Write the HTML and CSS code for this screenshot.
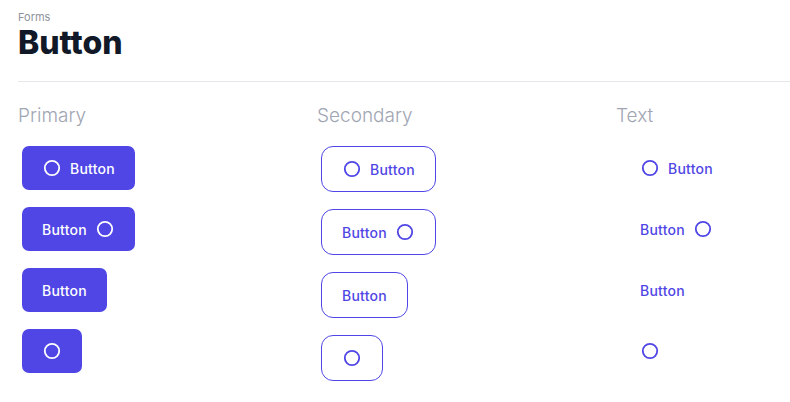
FILE: index.html
```html
<!DOCTYPE html>
<html lang="en">
<head>
    <meta charset="UTF-8">
    <meta name="viewport" content="width=device-width, initial-scale=1.0">
    <title>Button</title>
    <link rel="stylesheet" href="styles.css">
</head>
<body>
    <div class="page">
        <div class="header">
            <p class="eyebrow">Forms</p>
            <h1 class="title">Button</h1>
        </div>

        <div class="grid">
            <!-- primary -->
            <div class="col">
                <h2 class="col-title">Primary</h2>
                <div class="stack">
                    <button class="btn btn-primary">
                        <svg class="icon" viewBox="0 0 20 20"><circle cx="10" cy="10" r="7.2"/></svg>
                        Button
                    </button>
                    <button class="btn btn-primary">
                        Button
                        <svg class="icon" viewBox="0 0 20 20"><circle cx="10" cy="10" r="7.2"/></svg>
                    </button>
                    <button class="btn btn-primary">Button</button>
                    <button class="btn btn-primary">
                        <svg class="icon" viewBox="0 0 20 20"><circle cx="10" cy="10" r="7.2"/></svg>
                    </button>
                </div>
            </div>

            <!-- secondary -->
            <div class="col">
                <h2 class="col-title">Secondary</h2>
                <div class="stack">
                    <button class="btn btn-secondary">
                        <svg class="icon" viewBox="0 0 20 20"><circle cx="10" cy="10" r="7.2"/></svg>
                        Button
                    </button>
                    <button class="btn btn-secondary">
                        Button
                        <svg class="icon" viewBox="0 0 20 20"><circle cx="10" cy="10" r="7.2"/></svg>
                    </button>
                    <button class="btn btn-secondary">Button</button>
                    <button class="btn btn-secondary">
                        <svg class="icon" viewBox="0 0 20 20"><circle cx="10" cy="10" r="7.2"/></svg>
                    </button>
                </div>
            </div>

            <!-- text -->
            <div class="col">
                <h2 class="col-title">Text</h2>
                <div class="stack">
                    <button class="btn btn-text">
                        <svg class="icon" viewBox="0 0 20 20"><circle cx="10" cy="10" r="7.2"/></svg>
                        Button
                    </button>
                    <button class="btn btn-text">
                        Button
                        <svg class="icon" viewBox="0 0 20 20"><circle cx="10" cy="10" r="7.2"/></svg>
                    </button>
                    <button class="btn btn-text">Button</button>
                    <button class="btn btn-text">
                        <svg class="icon" viewBox="0 0 20 20"><circle cx="10" cy="10" r="7.2"/></svg>
                    </button>
                </div>
            </div>
        </div>
    </div>
</body>
</html>
```

FILE: styles.css
```css
body, h1, h2, p {
    margin: 0;
    padding: 0;
}
body {
    font-family: "Inter", "Noto Sans", sans-serif;
    background: #fff;
}
.page {
    padding: 11px 0 0 18px;
}
.header {
    padding-bottom: 18px;
    border-bottom: 1px solid #e5e7eb;
}
.eyebrow {
    font-size: 11px;
    line-height: 12px;
    color: #8f929c;
}
.title {
    font-size: 32px;
    line-height: 40px;
    font-weight: 800;
    color: #111827;
}
.grid {
    display: grid;
    grid-template-columns: 299px 299px 1fr;
    padding-top: 22px;
}
.col-title {
    font-size: 19px;
    line-height: 24px;
    font-weight: 300;
    color: #a1a5b3;
    margin-bottom: 18px;
}
.stack {
    display: flex;
    flex-direction: column;
    align-items: flex-start;
    gap: 17px;
    padding-left: 4px;
}
/* buttons */
.btn {
    display: inline-flex;
    align-items: center;
    gap: 8px;
    height: 44px;
    padding: 0 20px;
    border: 0;
    border-radius: 7px;
    font-family: inherit;
    font-size: 14px;
    font-weight: 500;
    letter-spacing: 0.25px;
    cursor: pointer;
}
.icon {
    width: 20px;
    height: 20px;
    fill: none;
    stroke: currentColor;
    stroke-width: 1.8;
}
.btn-primary {
    background-color: #4f46e5;
    color: #fff;
}
.btn-secondary {
    box-sizing: content-box;
    background-color: #fff;
    border: 1px solid #4f46e5;
    border-radius: 12px;
    color: #4f46e5;
}
.btn-text {
    background: none;
    color: #4f46e5;
}
```
